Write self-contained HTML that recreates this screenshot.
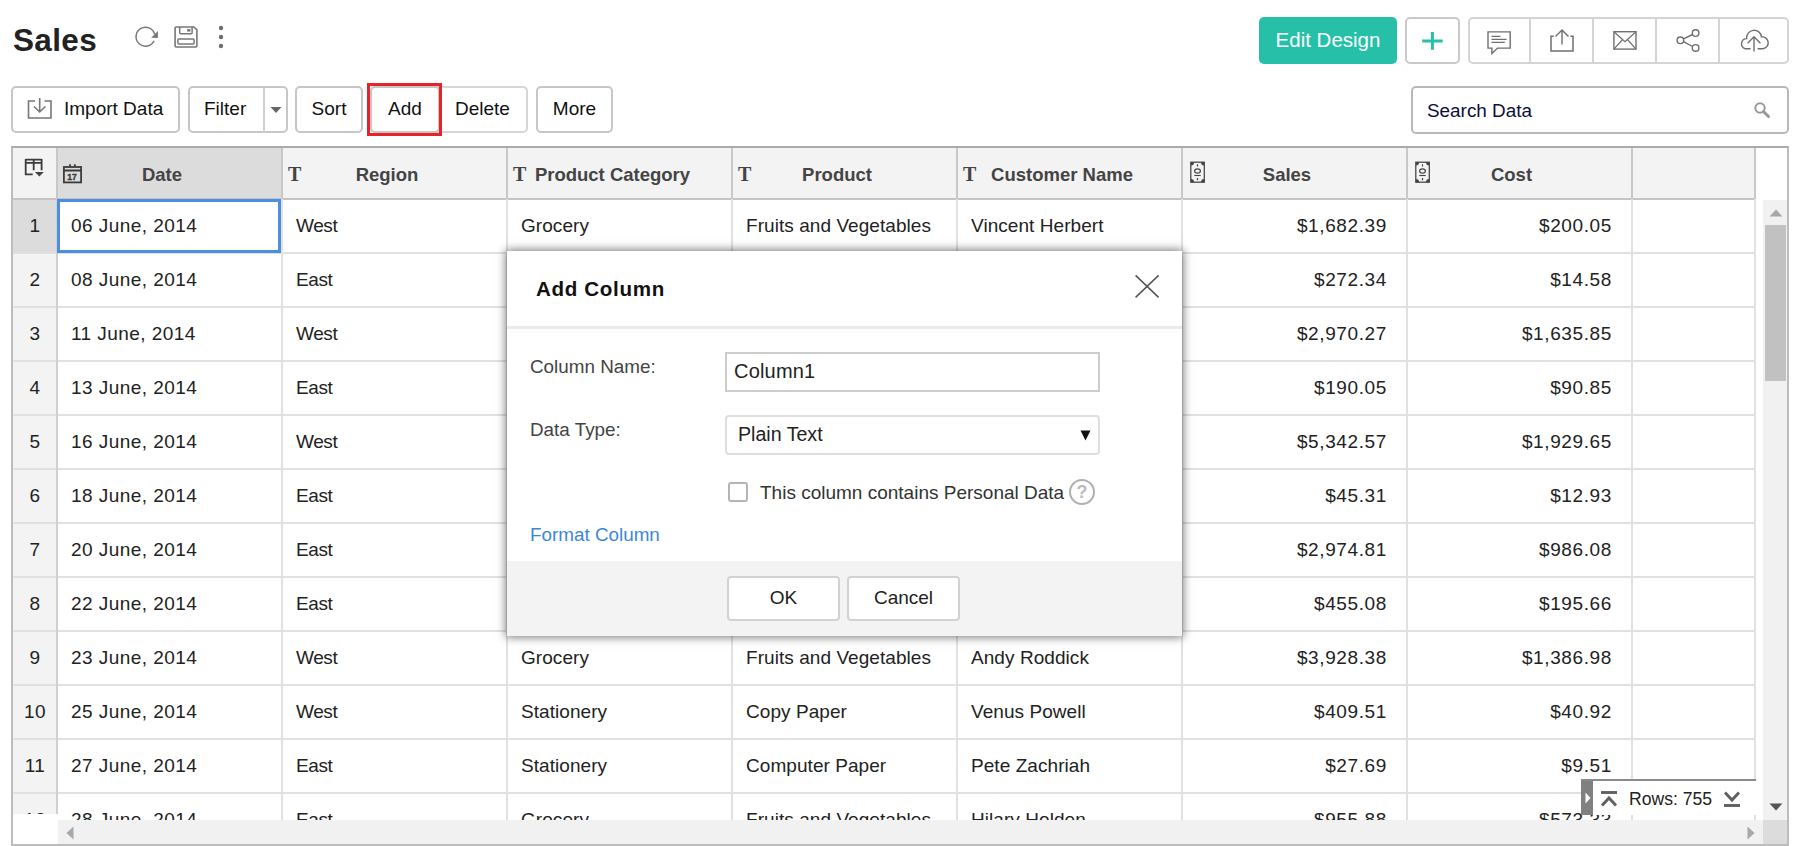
<!DOCTYPE html>
<html lang="en"><head><meta charset="utf-8"><title>Sales</title>
<style>
*{box-sizing:border-box;margin:0;padding:0}
html,body{width:1803px;height:846px;overflow:hidden;background:#fff}
body{font-family:"Liberation Sans",sans-serif;color:#222;position:relative;font-size:19px}
.a{position:absolute;white-space:nowrap}
.btn{position:absolute;border:2px solid #c6c6c6;border-radius:5px;background:#fff;top:86px;height:47px;line-height:42px;font-size:19px;color:#111;text-align:center;white-space:nowrap}
#grid{position:absolute;left:11px;top:146px;width:1778px;height:700px;border:2px solid #bdbdbd;border-top-color:#aaa;overflow:hidden;background:#fff}
.hl{position:absolute;left:0;height:2px;background:#e1e1e1}
.vl{position:absolute;top:0;width:2px;background:#e1e1e1}
.hc{position:absolute;top:0;height:51px;line-height:51px;font-weight:bold;font-size:18.5px;color:#444;text-align:center;white-space:nowrap}
.ti{position:absolute;top:0;line-height:51px;font-family:"Liberation Serif",serif;font-weight:bold;font-size:20px;color:#444}
.c{position:absolute;height:54px;line-height:51px;font-size:19px;color:#222;white-space:nowrap;letter-spacing:.06px}
.n{text-align:right;letter-spacing:.62px}
.d{letter-spacing:.45px}
.rn{position:absolute;left:0;width:45px;padding-right:1px;letter-spacing:.5px;height:54px;line-height:51px;text-align:center;font-size:19px;color:#222;background:#f3f3f3}
</style></head><body>

<div class="a" style="left:13px;top:18px;font-size:31.5px;letter-spacing:.35px;line-height:44px;font-weight:bold;color:#222">Sales</div>
<svg class="a" style="left:130px;top:20px" width="34" height="34" viewBox="130 20 34 34"><path d="M154.1 40.8 A9.5 9.5 0 1 1 154.7 34.2" fill="none" stroke="#777" stroke-width="1.5"/><path d="M157.9 31 V37.9 L151.2 37.7 Z" fill="#777"/></svg>
<svg class="a" style="left:170px;top:22px" width="32" height="30" viewBox="170 22 32 30"><path d="M176.1 27 H194 L196.9 29.9 V46 Q196.9 47 195.9 47 H176.1 Q175.1 47 175.1 46 V28 Q175.1 27 176.1 27 Z" fill="none" stroke="#777" stroke-width="1.6" stroke-linejoin="round"/><path d="M179.7 27 V32.8 Q179.7 33.8 180.7 33.8 H191.1 Q192.1 33.8 192.1 32.8 V27" fill="none" stroke="#777" stroke-width="1.5"/><rect x="187.2" y="29" width="3.2" height="2.6" fill="#777"/><rect x="177.9" y="38.9" width="16.2" height="5.2" rx="1" fill="none" stroke="#777" stroke-width="1.5"/></svg>
<svg class="a" style="left:216px;top:24px" width="10" height="26" viewBox="0 0 10 26"><circle cx="5" cy="4" r="2.2" fill="#6e6e6e"/><circle cx="5" cy="13" r="2.2" fill="#6e6e6e"/><circle cx="5" cy="22" r="2.2" fill="#6e6e6e"/></svg>
<div class="a" style="left:1259px;top:17px;width:138px;height:47px;border-radius:5px;background:#26c0a8;color:#fff;font-size:20.5px;line-height:46px;text-align:center">Edit Design</div>
<div class="a" style="left:1405px;top:17px;width:55px;height:47px;border-radius:5px;border:2px solid #c9c9c9;background:#fff"></div>
<svg class="a" style="left:1420px;top:28px" width="26" height="26" viewBox="1420 28 26 26"><path d="M1432.4 31.9 V49.8 M1422.2 40.9 H1442.7" stroke="#26c0a8" stroke-width="3" fill="none"/></svg>
<div class="a" style="left:1468px;top:17px;width:321px;height:47px;border-radius:5px;border:2px solid #d4d4d4;background:#fff"></div>
<div class="a" style="left:1529px;top:18px;width:2px;height:45px;background:#d4d4d4"></div>
<div class="a" style="left:1592px;top:18px;width:2px;height:45px;background:#d4d4d4"></div>
<div class="a" style="left:1655px;top:18px;width:2px;height:45px;background:#d4d4d4"></div>
<div class="a" style="left:1718px;top:18px;width:2px;height:45px;background:#d4d4d4"></div>
<svg class="a" style="left:1484px;top:28px" width="30" height="30" viewBox="1484 28 30 30"><path d="M1488 31.9 H1510.2 V48.1 H1497.5 L1491.9 53.6 V48.1 H1488 Z" fill="none" stroke="#6f6f6f" stroke-width="1.4" stroke-linejoin="miter"/><path d="M1491.5 36.3 H1500.4 M1491.5 39.3 H1506.5 M1491.5 42.3 H1504.8" stroke="#6f6f6f" stroke-width="1.2"/></svg>
<svg class="a" style="left:1546px;top:26px" width="32" height="30" viewBox="1546 26 32 30"><path d="M1553.6 36.2 H1551 V51 H1573 V36.2 H1570.4" fill="none" stroke="#6f6f6f" stroke-width="1.5"/><path d="M1562 44.6 V30 M1555.5 36.6 L1562 30 L1568.5 36.6" fill="none" stroke="#6f6f6f" stroke-width="1.4"/></svg>
<svg class="a" style="left:1610px;top:28px" width="30" height="26" viewBox="1610 28 30 26"><rect x="1613.9" y="31.7" width="22.1" height="17.4" fill="none" stroke="#6f6f6f" stroke-width="1.4"/><path d="M1613.9 31.7 L1625 41.6 L1636 31.7 M1613.9 49.1 L1622.6 39.5 M1636 49.1 L1627.4 39.5" fill="none" stroke="#6f6f6f" stroke-width="1.2"/></svg>
<svg class="a" style="left:1673px;top:26px" width="30" height="30" viewBox="1673 26 30 30"><circle cx="1680.4" cy="40.3" r="3.3" fill="none" stroke="#6f6f6f" stroke-width="1.4"/><circle cx="1695.6" cy="33.1" r="3.3" fill="none" stroke="#6f6f6f" stroke-width="1.4"/><circle cx="1695.6" cy="47.9" r="3.3" fill="none" stroke="#6f6f6f" stroke-width="1.4"/><path d="M1683.4 38.9 L1692.6 34.5 M1683.4 41.7 L1692.6 46.5" stroke="#6f6f6f" stroke-width="1.4"/></svg>
<svg class="a" style="left:1736px;top:26px" width="36" height="30" viewBox="1736 26 36 30"><path d="M1750.6 48.7 H1745 A5.2 5.2 0 0 1 1746.7 38.6 A7.2 7.2 0 0 1 1761.5 36.9 A5.8 5.8 0 0 1 1763 48.7 H1757.6" fill="none" stroke="#6f6f6f" stroke-width="1.4"/><path d="M1754 51.6 V36.8 M1747.6 43.3 L1754 36.8 L1760.4 43.3" fill="none" stroke="#6f6f6f" stroke-width="1.4"/></svg>
<div class="btn" style="left:11px;width:169px;text-align:left;padding-left:51px">Import Data</div>
<svg class="a" style="left:25px;top:96px" width="30" height="26" viewBox="0 0 30 26"><path d="M10 5 H3.5 V22 H26 V5 H19.5" fill="none" stroke="#777" stroke-width="1.6"/><path d="M14.7 2 V16 M9 10.5 L14.7 16 L20.4 10.5" fill="none" stroke="#777" stroke-width="1.6"/></svg>
<div class="btn" style="left:188px;width:100px;text-align:left;padding-left:14px">Filter</div>
<div class="a" style="left:263px;top:88px;width:2px;height:44px;background:#d0d0d0"></div>
<svg class="a" style="left:269px;top:106px" width="14" height="8" viewBox="0 0 14 8"><path d="M1.5 1 H12.5 L7 7 Z" fill="#666"/></svg>
<div class="btn" style="left:295px;width:68px">Sort</div>
<div class="btn" style="left:370px;width:158px;border-color:#d6d6d6;text-align:left;padding-left:83px">Delete</div>
<div class="btn" style="left:370px;width:70px">Add</div>
<div class="a" style="left:367px;top:83px;width:75px;height:53px;border:3px solid #e6222d"></div>
<div class="btn" style="left:536px;width:77px">More</div>
<div class="a" style="left:1411px;top:86px;width:378px;height:48px;border:2px solid #b9b9b9;border-radius:5px;background:#fff"></div>
<div class="a" style="left:1427px;top:89px;line-height:44px;font-size:18.9px;color:#0e0e3a">Search Data</div>
<svg class="a" style="left:1752px;top:100px" width="20" height="20" viewBox="0 0 20 20"><circle cx="8" cy="8" r="4.7" fill="none" stroke="#999" stroke-width="2"/><path d="M11.5 11.5 L16.5 16.5" stroke="#999" stroke-width="3" stroke-linecap="round"/></svg>
<div id="grid">
<div class="a" style="left:0;top:0;width:1742px;height:51px;background:#f3f3f3"></div>
<div class="a" style="left:45px;top:0;width:225px;height:51px;background:#dcdcdc"></div>
<div class="hc" style="left:108px;width:82px;top:1px">Date</div>
<div class="hc" style="left:324px;width:100px;top:1px">Region</div>
<div class="hc" style="left:502px;width:195px;top:1px">Product Category</div>
<div class="hc" style="left:770px;width:108px;top:1px">Product</div>
<div class="hc" style="left:958px;width:182px;top:1px">Customer Name</div>
<div class="hc" style="left:1231px;width:86px;top:1px">Sales</div>
<div class="hc" style="left:1459px;width:79px;top:1px">Cost</div>
<div class="ti" style="left:275px;top:1px">T</div>
<div class="ti" style="left:500px;top:1px">T</div>
<div class="ti" style="left:725px;top:1px">T</div>
<div class="ti" style="left:950px;top:1px">T</div>
<div class="rn" style="top:52px;background:#dcdcdc">1</div>
<div class="c d" style="left:58px;top:52px">06 June, 2014</div>
<div class="c" style="left:283px;top:52px;letter-spacing:-.4px">West</div>
<div class="c" style="left:508px;top:52px">Grocery</div>
<div class="c" style="left:733px;top:52px">Fruits and Vegetables</div>
<div class="c" style="left:958px;top:52px">Vincent Herbert</div>
<div class="c n" style="left:1177px;width:197px;top:52px">$1,682.39</div>
<div class="c n" style="left:1402px;width:197px;top:52px">$200.05</div>
<div class="rn" style="top:106px">2</div>
<div class="c d" style="left:58px;top:106px">08 June, 2014</div>
<div class="c" style="left:283px;top:106px;letter-spacing:-.4px">East</div>
<div class="c n" style="left:1177px;width:197px;top:106px">$272.34</div>
<div class="c n" style="left:1402px;width:197px;top:106px">$14.58</div>
<div class="rn" style="top:160px">3</div>
<div class="c d" style="left:58px;top:160px">11 June, 2014</div>
<div class="c" style="left:283px;top:160px;letter-spacing:-.4px">West</div>
<div class="c n" style="left:1177px;width:197px;top:160px">$2,970.27</div>
<div class="c n" style="left:1402px;width:197px;top:160px">$1,635.85</div>
<div class="rn" style="top:214px">4</div>
<div class="c d" style="left:58px;top:214px">13 June, 2014</div>
<div class="c" style="left:283px;top:214px;letter-spacing:-.4px">East</div>
<div class="c n" style="left:1177px;width:197px;top:214px">$190.05</div>
<div class="c n" style="left:1402px;width:197px;top:214px">$90.85</div>
<div class="rn" style="top:268px">5</div>
<div class="c d" style="left:58px;top:268px">16 June, 2014</div>
<div class="c" style="left:283px;top:268px;letter-spacing:-.4px">West</div>
<div class="c n" style="left:1177px;width:197px;top:268px">$5,342.57</div>
<div class="c n" style="left:1402px;width:197px;top:268px">$1,929.65</div>
<div class="rn" style="top:322px">6</div>
<div class="c d" style="left:58px;top:322px">18 June, 2014</div>
<div class="c" style="left:283px;top:322px;letter-spacing:-.4px">East</div>
<div class="c n" style="left:1177px;width:197px;top:322px">$45.31</div>
<div class="c n" style="left:1402px;width:197px;top:322px">$12.93</div>
<div class="rn" style="top:376px">7</div>
<div class="c d" style="left:58px;top:376px">20 June, 2014</div>
<div class="c" style="left:283px;top:376px;letter-spacing:-.4px">East</div>
<div class="c n" style="left:1177px;width:197px;top:376px">$2,974.81</div>
<div class="c n" style="left:1402px;width:197px;top:376px">$986.08</div>
<div class="rn" style="top:430px">8</div>
<div class="c d" style="left:58px;top:430px">22 June, 2014</div>
<div class="c" style="left:283px;top:430px;letter-spacing:-.4px">East</div>
<div class="c n" style="left:1177px;width:197px;top:430px">$455.08</div>
<div class="c n" style="left:1402px;width:197px;top:430px">$195.66</div>
<div class="rn" style="top:484px">9</div>
<div class="c d" style="left:58px;top:484px">23 June, 2014</div>
<div class="c" style="left:283px;top:484px;letter-spacing:-.4px">West</div>
<div class="c" style="left:508px;top:484px">Grocery</div>
<div class="c" style="left:733px;top:484px">Fruits and Vegetables</div>
<div class="c" style="left:958px;top:484px">Andy Roddick</div>
<div class="c n" style="left:1177px;width:197px;top:484px">$3,928.38</div>
<div class="c n" style="left:1402px;width:197px;top:484px">$1,386.98</div>
<div class="rn" style="top:538px">10</div>
<div class="c d" style="left:58px;top:538px">25 June, 2014</div>
<div class="c" style="left:283px;top:538px;letter-spacing:-.4px">West</div>
<div class="c" style="left:508px;top:538px">Stationery</div>
<div class="c" style="left:733px;top:538px">Copy Paper</div>
<div class="c" style="left:958px;top:538px">Venus Powell</div>
<div class="c n" style="left:1177px;width:197px;top:538px">$409.51</div>
<div class="c n" style="left:1402px;width:197px;top:538px">$40.92</div>
<div class="rn" style="top:592px">11</div>
<div class="c d" style="left:58px;top:592px">27 June, 2014</div>
<div class="c" style="left:283px;top:592px;letter-spacing:-.4px">East</div>
<div class="c" style="left:508px;top:592px">Stationery</div>
<div class="c" style="left:733px;top:592px">Computer Paper</div>
<div class="c" style="left:958px;top:592px">Pete Zachriah</div>
<div class="c n" style="left:1177px;width:197px;top:592px">$27.69</div>
<div class="c n" style="left:1402px;width:197px;top:592px">$9.51</div>
<div class="rn" style="top:646px">12</div>
<div class="c d" style="left:58px;top:646px">28 June, 2014</div>
<div class="c" style="left:283px;top:646px;letter-spacing:-.4px">East</div>
<div class="c" style="left:508px;top:646px">Grocery</div>
<div class="c" style="left:733px;top:646px">Fruits and Vegetables</div>
<div class="c" style="left:958px;top:646px">Hilary Holden</div>
<div class="c n" style="left:1177px;width:197px;top:646px">$955.88</div>
<div class="c n" style="left:1402px;width:197px;top:646px">$573.33</div>
<div class="hl" style="top:50px;width:1742px;background:#c4c4c4"></div>
<div class="hl" style="top:104px;width:1742px;background:#e1e1e1"></div>
<div class="hl" style="top:158px;width:1742px;background:#e1e1e1"></div>
<div class="hl" style="top:212px;width:1742px;background:#e1e1e1"></div>
<div class="hl" style="top:266px;width:1742px;background:#e1e1e1"></div>
<div class="hl" style="top:320px;width:1742px;background:#e1e1e1"></div>
<div class="hl" style="top:374px;width:1742px;background:#e1e1e1"></div>
<div class="hl" style="top:428px;width:1742px;background:#e1e1e1"></div>
<div class="hl" style="top:482px;width:1742px;background:#e1e1e1"></div>
<div class="hl" style="top:536px;width:1742px;background:#e1e1e1"></div>
<div class="hl" style="top:590px;width:1742px;background:#e1e1e1"></div>
<div class="hl" style="top:644px;width:1742px;background:#e1e1e1"></div>
<div class="hl" style="top:698px;width:1742px;background:#e1e1e1"></div>
<div class="vl" style="left:43px;height:51px;background:#c8c8c8"></div>
<div class="vl" style="left:43px;top:51px;height:640px;background:#d0d0d0"></div>
<div class="vl" style="left:268px;height:51px;background:#c8c8c8"></div>
<div class="vl" style="left:268px;top:51px;height:640px;background:#e1e1e1"></div>
<div class="vl" style="left:493px;height:51px;background:#c8c8c8"></div>
<div class="vl" style="left:493px;top:51px;height:640px;background:#e1e1e1"></div>
<div class="vl" style="left:718px;height:51px;background:#c8c8c8"></div>
<div class="vl" style="left:718px;top:51px;height:640px;background:#e1e1e1"></div>
<div class="vl" style="left:943px;height:51px;background:#c8c8c8"></div>
<div class="vl" style="left:943px;top:51px;height:640px;background:#e1e1e1"></div>
<div class="vl" style="left:1168px;height:51px;background:#c8c8c8"></div>
<div class="vl" style="left:1168px;top:51px;height:640px;background:#e1e1e1"></div>
<div class="vl" style="left:1393px;height:51px;background:#c8c8c8"></div>
<div class="vl" style="left:1393px;top:51px;height:640px;background:#e1e1e1"></div>
<div class="vl" style="left:1618px;height:51px;background:#c8c8c8"></div>
<div class="vl" style="left:1618px;top:51px;height:640px;background:#e1e1e1"></div>
<div class="vl" style="left:1741px;height:51px;background:#c8c8c8"></div>
<div class="vl" style="left:1741px;top:51px;height:640px;background:#e1e1e1"></div>
<div class="a" style="left:44px;top:51px;width:224px;height:54px;border:3px solid #4a8fe2;background:transparent"></div>
<div class="a" style="left:1750px;top:52px;width:25px;height:625px;background:#f1f1f1"></div>
<div class="a" style="left:1752px;top:77px;width:21px;height:156px;background:#c1c1c1"></div>
<svg class="a" style="left:1756px;top:61px" width="14" height="8" viewBox="0 0 14 8"><path d="M0.5 7.5 L7 0.5 L13.5 7.5 Z" fill="#a8a8a8"/></svg>
<svg class="a" style="left:1756px;top:655px" width="14" height="8" viewBox="0 0 14 8"><path d="M0.5 0.5 L7 7.5 L13.5 0.5 Z" fill="#555"/></svg>
<div class="a" style="left:0;top:666px;width:45px;height:30px;background:#fff"></div>
<div class="a" style="left:45px;top:672px;width:1705px;height:26px;background:#f1f1f1"></div>
<div class="a" style="left:1750px;top:672px;width:25px;height:26px;background:#dcdcdc"></div>
<svg class="a" style="left:53px;top:678px" width="8" height="14" viewBox="0 0 8 14"><path d="M7.5 0.5 L0.5 7 L7.5 13.5 Z" fill="#a8a8a8"/></svg>
<svg class="a" style="left:1734px;top:678px" width="8" height="14" viewBox="0 0 8 14"><path d="M0.5 0.5 L7.5 7 L0.5 13.5 Z" fill="#a8a8a8"/></svg>
<div class="a" style="left:1568px;top:631px;width:175px;height:36px;background:#fff;border-top:2px solid #8a8a8a"></div>
<div class="a" style="left:1568px;top:633px;width:12px;height:34px;background:#808080"></div>
<svg class="a" style="left:1572px;top:644px" width="6" height="12" viewBox="0 0 6 12"><path d="M0.5 0.5 L5.5 6 L0.5 11.5 Z" fill="#fff"/></svg>
<div class="a" style="left:1616px;top:634px;line-height:34px;font-size:17.6px;color:#222">Rows: 755</div>
<svg class="a" style="left:1587px;top:642px" width="18" height="18" viewBox="0 0 18 18"><path d="M1 2.5 H17" stroke="#606060" stroke-width="2.9"/><path d="M2 15.5 L9 8 L16 15.5" fill="none" stroke="#606060" stroke-width="2.9"/></svg>
<svg class="a" style="left:1710px;top:642px" width="18" height="18" viewBox="0 0 18 18"><path d="M1 15.5 H17" stroke="#606060" stroke-width="2.9"/><path d="M2 2.5 L9 10 L16 2.5" fill="none" stroke="#606060" stroke-width="2.9"/></svg>
</div>
<svg class="a" style="left:22px;top:156px" width="26" height="24" viewBox="22 156 26 24"><path d="M25.7 159.7 H41.6 M25.7 162.9 H41.6 M25.7 159 V174.4 H32.7 M33.7 159 V170.2 M41.6 159 V170.2" fill="none" stroke="#3c3c3c" stroke-width="1.8"/><path d="M34.9 172 H43.8 L39.35 176.6 Z" fill="#444"/></svg>
<svg class="a" style="left:60px;top:162px" width="26" height="24" viewBox="60 162 26 24"><rect x="63.9" y="167" width="17.2" height="15.4" fill="none" stroke="#3c3c3c" stroke-width="1.8"/><path d="M63.9 170.5 H81.1 M70 164.2 V167 M74.8 164.2 V167" stroke="#3c3c3c" stroke-width="1.8" fill="none"/><text x="72" y="179.9" text-anchor="middle" style="font-family:'Liberation Sans',sans-serif" font-weight="bold" font-size="8.6" fill="#3c3c3c" stroke="#3c3c3c" stroke-width="0.35">17</text></svg>
<svg class="a" style="left:1186px;top:158px" width="22" height="28" viewBox="1186 158 22 28"><rect x="1190.8" y="162.2" width="13.5" height="20" fill="#f3f3f3" stroke="#444" stroke-width="1.25"/><path d="M1190.8 162.2 h3.3 a3.3 3.3 0 0 1 -3.3 3.3 Z M1204.3 162.2 v3.3 a3.3 3.3 0 0 1 -3.3 -3.3 Z M1190.8 182.2 v-3.3 a3.3 3.3 0 0 1 3.3 3.3 Z M1204.3 182.2 h-3.3 a3.3 3.3 0 0 1 3.3 -3.3 Z" fill="#444"/><ellipse cx="1197.5" cy="171" rx="2.9" ry="2.2" fill="none" stroke="#444" stroke-width="1.2"/><path d="M1194.3 175.5 H1200.7" stroke="#444" stroke-width="1.1"/><path d="M1197.5 164.2 V166.6 M1197.5 177.9 V180.2" stroke="#444" stroke-width="1.2"/></svg>
<svg class="a" style="left:1411px;top:158px" width="22" height="28" viewBox="1186 158 22 28"><rect x="1190.8" y="162.2" width="13.5" height="20" fill="#f3f3f3" stroke="#444" stroke-width="1.25"/><path d="M1190.8 162.2 h3.3 a3.3 3.3 0 0 1 -3.3 3.3 Z M1204.3 162.2 v3.3 a3.3 3.3 0 0 1 -3.3 -3.3 Z M1190.8 182.2 v-3.3 a3.3 3.3 0 0 1 3.3 3.3 Z M1204.3 182.2 h-3.3 a3.3 3.3 0 0 1 3.3 -3.3 Z" fill="#444"/><ellipse cx="1197.5" cy="171" rx="2.9" ry="2.2" fill="none" stroke="#444" stroke-width="1.2"/><path d="M1194.3 175.5 H1200.7" stroke="#444" stroke-width="1.1"/><path d="M1197.5 164.2 V166.6 M1197.5 177.9 V180.2" stroke="#444" stroke-width="1.2"/></svg>
<div class="a" style="left:507px;top:251px;width:675px;height:385px;background:#fff;box-shadow:0 0 9px 1px rgba(0,0,0,.55)">
<div class="a" style="left:29px;top:17px;font-size:20.6px;letter-spacing:.65px;font-weight:bold;line-height:41px;color:#111">Add Column</div>
<svg class="a" style="left:626px;top:21px" width="28" height="28" viewBox="0 0 28 28"><path d="M2.6 3.4 L25.6 25.4 M25.6 3.4 L2.6 25.4" stroke="#555" stroke-width="1.5" fill="none"/></svg>
<div class="a" style="left:0;top:75px;width:675px;height:3px;background:#ebebeb"></div>
<div class="a" style="left:23px;top:101px;font-size:18.85px;line-height:30px;color:#444">Column Name:</div>
<div class="a" style="left:218px;top:101px;width:375px;height:40px;border:2px solid #cdcdcd;background:#fff;font-size:20px;line-height:35px;padding-left:7px;color:#222;letter-spacing:.2px">Column1</div>
<div class="a" style="left:23px;top:164px;font-size:18.85px;line-height:30px;color:#444">Data Type:</div>
<div class="a" style="left:218px;top:164px;width:375px;height:40px;border:2px solid #dedede;border-radius:4px;background:#fff;font-size:19.6px;line-height:35px;padding-left:11px;color:#222">Plain Text</div>
<svg class="a" style="left:573px;top:179px" width="11" height="11" viewBox="0 0 11 11"><path d="M0.5 0.5 H10.5 L5.5 10.5 Z" fill="#111"/></svg>
<div class="a" style="left:221px;top:231px;width:20px;height:20px;border:2px solid #b5b5b5;border-radius:3px;background:#fff"></div>
<div class="a" style="left:253px;top:227px;font-size:19px;line-height:30px;color:#333">This column contains Personal Data</div>
<div class="a" style="left:562px;top:228px;width:26px;height:26px;border:2px solid #b0b0b0;border-radius:50%;text-align:center;font-size:18px;font-weight:bold;line-height:23px;color:#bbb">?</div>
<div class="a" style="left:23px;top:269px;font-size:18.85px;line-height:30px;color:#3a87d9">Format Column</div>
<div class="a" style="left:0;top:310px;width:675px;height:75px;background:#f3f3f3"></div>
<div class="a" style="left:220px;top:325px;width:113px;height:45px;border:2px solid #d2d2d2;border-radius:4px;background:#fff;font-size:19px;line-height:40px;text-align:center;color:#222">OK</div>
<div class="a" style="left:340px;top:325px;width:113px;height:45px;border:2px solid #d2d2d2;border-radius:4px;background:#fff;font-size:19px;line-height:40px;text-align:center;color:#222">Cancel</div>
</div>
</body></html>
